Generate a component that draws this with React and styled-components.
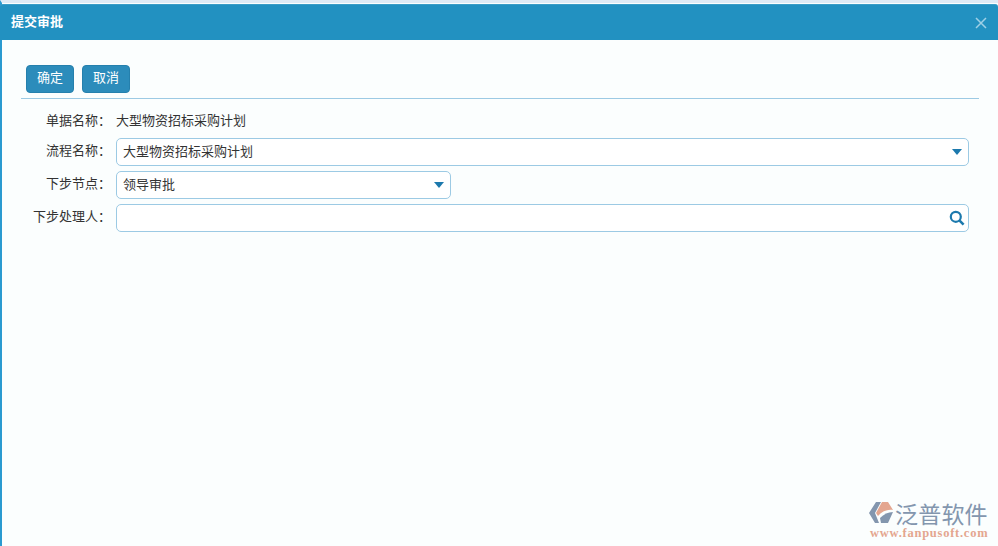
import React from 'react';
import styled, {createGlobalStyle} from 'styled-components';

const GlobalStyle = createGlobalStyle`
  html, body {
    margin: 0;
    padding: 0;
    height: 100%;
    overflow: hidden;
    background: #fbfefe;
  }
  * {
    box-sizing: border-box;
  }
  body {
    font-family: "Noto Sans CJK SC", "Liberation Sans", sans-serif;
  }
`;

const Dialog = styled.div`
  position: relative;
  width: 998px;
  height: 546px;
  padding-top: 4px;
  background: #fbfefe;
  border-top: 3px solid #dfeaf5;
  border-left: 2px solid #2a9ad0;
  display: flex;
  flex-direction: column;
`;

const Header = styled.div`
  height: 36px;
  margin-top: -3px;
  margin-left: -2px;
  padding: 0 11px;
  background: #2291c1;
  border-top: 1px solid #3a9dc8;
  border-radius: 3px 3px 0 0;
  display: flex;
  align-items: center;
  justify-content: space-between;
`;

const Title = styled.div`
  color: #fff;
  font-size: 13px;
  font-weight: 700;
  line-height: 16px;
  margin-top: -3px;
`;

const Close = styled.svg`
  width: 12px;
  height: 12px;
  margin-top: 1px;
  stroke: #9fd0e6;
  stroke-width: 1.5;
  fill: none;
`;

const Body = styled.div`
  padding: 25px 19px 0 19px;
`;

const Toolbar = styled.div`
  display: flex;
  gap: 8px;
  padding: 0 0 5px 5px;
  border-bottom: 1px solid #9ccae4;
`;

const ToolButton = styled.button`
  width: 48px;
  height: 28px;
  padding: 0 0 4px;
  color: #fff;
  font-family: inherit;
  font-size: 13px;
  line-height: 18px;
  background: #2c8cbb;
  border: 1px solid #2580ad;
  border-radius: 4px;
`;

const Form = styled.div`
  display: grid;
  grid-template-columns: 90px 1fr;
  column-gap: 5px;
  row-gap: 5px;
  align-items: center;
  margin-top: 6px;
`;

// the plain-text row sits lower in its line than the rows that hold a field
const Label = styled.div`
  color: #333;
  font-size: 13px;
  line-height: 24px;
  margin: ${props => (props.$plain ? '3px 0 1px' : '0 0 4px')};
  text-align: right;
  white-space: nowrap;
`;

const Value = styled.div`
  color: #333;
  font-size: 13px;
  line-height: 24px;
  margin: 3px 0 1px;
`;

const Field = styled.div`
  width: ${props => props.width}px;
  height: 28px;
  padding: 0 6px;
  color: #333;
  font-size: 13px;
  background: #fff;
  border: 1px solid #9ccae4;
  border-radius: 5px;
  display: flex;
  align-items: center;
  justify-content: space-between;
`;

const FieldText = styled.span`
  line-height: 20px;
  margin-bottom: 3px;
`;

const Caret = styled.span`
  width: 0;
  height: 0;
  border-left: 5.5px solid transparent;
  border-right: 5.5px solid transparent;
  border-top: 6px solid #1c79ad;
`;

const SearchIcon = styled.svg`
  width: 16px;
  height: 16px;
  margin-right: -3px;
  stroke: #1c79ad;
  fill: none;
`;

const Logo = styled.div`
  position: absolute;
  left: 866px;
  bottom: 6px;
  width: 126px;
`;

const LogoTop = styled.div`
  display: flex;
  align-items: center;
`;

const LogoMark = styled.svg`
  width: 27px;
  height: 26px;
  flex: none;
`;

const LogoName = styled.div`
  color: #8396ae;
  font-family: "Noto Sans CJK SC", sans-serif;
  font-size: 23px;
  font-weight: 400;
  line-height: 26px;
  letter-spacing: 0.2px;
  white-space: nowrap;
`;

const LogoUrl = styled.div`
  color: #e4a68f;
  font-family: "Liberation Serif", serif;
  font-size: 12.5px;
  font-weight: 700;
  line-height: 13px;
  letter-spacing: 0.75px;
  white-space: nowrap;
  margin: 1px 0 0 2px;
`;

const Select = ({width, children}) => (
  <Field width={width}>
    <FieldText>{children}</FieldText>
    <Caret />
  </Field>
);

const App = () => (
  <>
    <GlobalStyle />
    <Dialog>
      <Header>
        <Title>提交审批</Title>
        <Close viewBox="0 0 12 12">
          <path d="M1 1 L11 11 M11 1 L1 11" />
        </Close>
      </Header>
      <Body>
        <Toolbar>
          <ToolButton>确定</ToolButton>
          <ToolButton>取消</ToolButton>
        </Toolbar>
        <Form>
          <Label $plain>单据名称：</Label>
          <Value>大型物资招标采购计划</Value>
          <Label>流程名称：</Label>
          <Select width={853}>大型物资招标采购计划</Select>
          <Label>下步节点：</Label>
          <Select width={335}>领导审批</Select>
          <Label>下步处理人：</Label>
          <Field width={853}>
            <span />
            <SearchIcon viewBox="0 0 16 16">
              <circle cx="6.8" cy="6.8" r="5" strokeWidth="2.2" />
              <path d="M10.6 10.6 L14.6 14.6" strokeWidth="2.6" />
            </SearchIcon>
          </Field>
        </Form>
      </Body>
      <Logo>
        <LogoTop>
          <LogoMark viewBox="0 0 27 26">
            <path d="M8 2 L13 2 L7 13 L11 23 L7 23 L1 13 Z" fill="#8396ae" />
            <path d="M14 2 L20 2 L25 10 C20 9 14 11 10 16 L8 13 Z" fill="#e4a68f" />
            <path d="M12 18 C16 14 20 12 25 12 L20 23 L13 23 Z" fill="#8396ae" />
          </LogoMark>
          <LogoName>泛普软件</LogoName>
        </LogoTop>
        <LogoUrl>www.fanpusoft.com</LogoUrl>
      </Logo>
    </Dialog>
  </>
);

export default App;
